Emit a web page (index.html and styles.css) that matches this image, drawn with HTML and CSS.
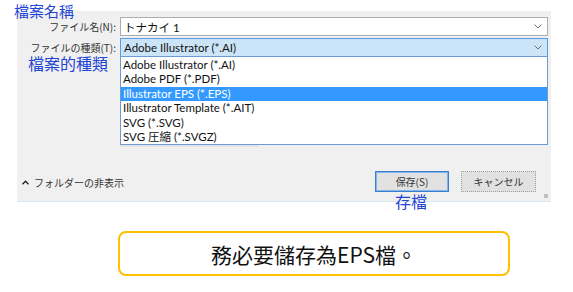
FILE: index.html
```html
<!DOCTYPE html>
<html lang="zh-Hant">
<head>
    <meta charset="UTF-8">
    <meta name="viewport" content="width=device-width, initial-scale=1.0">
    <title>儲存為EPS</title>
    <link rel="stylesheet" href="styles.css">
</head>
<body>
    <div class="shot">
        <div class="dialog">
            <div class="fields">
                <label class="field-label">ファイル名(N):</label>
                <div class="combo">
                    <span>トナカイ 1</span>
                    <svg class="chevron" width="8" height="5" viewBox="0 0 8 5"><path d="M0.5 0.5 L4 4 L7.5 0.5" fill="none" stroke="#707070" stroke-width="1"/></svg>
                </div>
                <label class="field-label">ファイルの種類(T):</label>
                <div class="combo combo-active">
                    <span>Adobe Illustrator (*.AI)</span>
                    <svg class="chevron" width="8" height="5" viewBox="0 0 8 5"><path d="M0.5 0.5 L4 4 L7.5 0.5" fill="none" stroke="#707070" stroke-width="1"/></svg>
                </div>
            </div>

            <div class="hidden-strip"></div>

            <ul class="dropdown">
                <li>Adobe Illustrator (*.AI)</li>
                <li>Adobe PDF (*.PDF)</li>
                <li class="selected">Illustrator EPS (*.EPS)</li>
                <li>Illustrator Template (*.AIT)</li>
                <li>SVG (*.SVG)</li>
                <li>SVG 圧縮 (*.SVGZ)</li>
            </ul>

            <div class="footer">
                <div class="toggle">
                    <svg width="7" height="5" viewBox="0 0 7 5"><path d="M0.5 4.2 L3.5 1.2 L6.5 4.2" fill="none" stroke="#222" stroke-width="1.4"/></svg>
                    <span>フォルダーの非表示</span>
                </div>
                <div class="buttons">
                    <button class="btn btn-default">保存(S)</button>
                    <button class="btn btn-cancel">キャンセル</button>
                </div>
            </div>
            <div class="grip"></div>

            <!-- annotations -->
            <span class="note note-name">檔案名稱</span>
            <span class="note note-type">檔案的種類</span>
            <span class="note note-save">存檔</span>
        </div>

        <div class="callout">務必要儲存為EPS檔。</div>
    </div>
</body>
</html>
```

FILE: styles.css
```css
/* page */
body {
    margin: 0;
    background: #ffffff;
    font-family: "Noto Sans", "Noto Sans CJK JP", sans-serif;
}

.shot {
    padding: 11px 0 0 17px;
}

/* dialog panel */
.dialog {
    position: relative;
    width: 534px;
    height: 191px;
    background: #f0f0f0;
    border-bottom: 1px solid #dbe7f5;
    box-sizing: border-box;
    display: flex;
    flex-direction: column;
}

.fields {
    display: grid;
    grid-template-columns: 99px 428px;
    column-gap: 4px;
    row-gap: 2px;
    padding-top: 6px;
}

.field-label {
    font-size: 10px;
    line-height: 1;
    color: #333;
    text-align: right;
    align-self: center;
    font-family: "Noto Sans CJK JP", sans-serif;
}

.combo {
    height: 19px;
    box-sizing: border-box;
    border: 1px solid #acacac;
    background: #ffffff;
    display: flex;
    align-items: center;
    justify-content: space-between;
    padding: 0 5px 0 3px;
    font-size: 11.5px;
    color: #111;
    font-family: "Lato", "Noto Sans CJK JP", sans-serif;
}

.combo-active {
    height: 19px;
    background: #cce4f7;
    border: 1px solid #569de5;
}

/* something sitting behind the open list */
.hidden-strip {
    margin: 88px 0 0 103px;
    width: 138px;
    height: 2px;
    background: #e2e2e2;
}

/* open list of the type combo */
.dropdown {
    position: absolute;
    top: 45px;
    left: 103px;
    width: 428px;
    height: 89px;
    box-sizing: border-box;
    margin: 0;
    padding: 1px 0 0 0;
    list-style: none;
    background: #ffffff;
    border: 1px solid #6b9bd2;
    font-family: "Lato", "Noto Sans CJK JP", sans-serif;
    font-size: 11.5px;
    color: #111;
}

.dropdown li {
    height: 14.4px;
    line-height: 14.4px;
    padding-left: 2px;
    white-space: nowrap;
}

.dropdown li.selected {
    background: #3399ff;
    color: #ffffff;
}

/* bottom bar */
.footer {
    margin-top: auto;
    display: flex;
    align-items: center;
    justify-content: space-between;
    padding: 0 15px 9px 5px;
}

.toggle {
    display: flex;
    align-items: center;
    gap: 5px;
    font-size: 10px;
    color: #333;
    font-family: "Noto Sans CJK JP", sans-serif;
    padding-top: 2px;
}

.buttons {
    display: flex;
    gap: 12px;
}

.btn {
    width: 75px;
    height: 21px;
    box-sizing: border-box;
    background: #e1e1e1;
    font-size: 10px;
    color: #333;
    font-family: "Noto Sans CJK JP", sans-serif;
    padding: 0;
}

.btn-default {
    width: 74px;
    border: 1px solid #3c7fd0;
    box-shadow: inset 0 0 0 1px #7eb4ea;
}

.btn-cancel {
    border: 1px dotted #a0a0a0;
}

.grip {
    position: absolute;
    right: 3px;
    bottom: 3px;
    width: 4px;
    height: 4px;
    background: radial-gradient(circle, #bbb 0.7px, transparent 0.8px) 0 0 / 2px 2px;
}

/* blue annotations */
.note {
    position: absolute;
    color: #1f45d4;
    font-family: "Noto Sans CJK TC", sans-serif;
    font-size: 15px;
    line-height: 1;
    white-space: nowrap;
}

.note-name {
    top: -8px;
    left: -3px;
}

.note-type {
    top: 44px;
    left: 11px;
    font-size: 16px;
}

.note-save {
    top: 182px;
    left: 378px;
    font-size: 16px;
}

/* yellow callout */
.callout {
    margin: 29px 0 0 101px;
    width: 392px;
    height: 45px;
    box-sizing: border-box;
    border: 2px solid #ffc000;
    border-radius: 8px;
    display: flex;
    align-items: center;
    justify-content: center;
    font-family: "Noto Sans CJK JP", sans-serif;
    font-size: 21px;
    color: #111;
}
```
